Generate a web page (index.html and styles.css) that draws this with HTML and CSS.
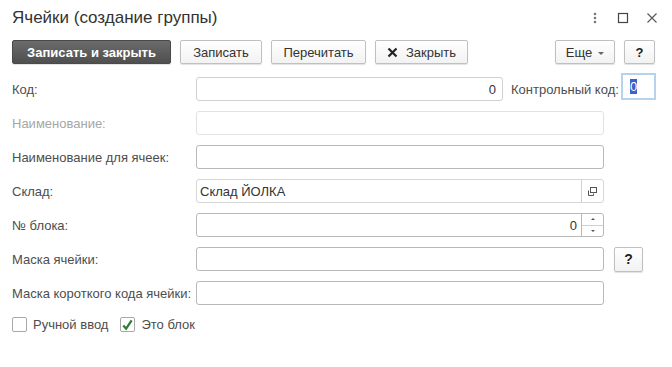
FILE: index.html
```html
<!DOCTYPE html>
<html lang="ru">

<head>
    <meta charset="UTF-8">
    <title>Ячейки (создание группы)</title>
    <link rel="stylesheet" href="styles.css">
</head>

<body>
    <div class="window">
        <div class="title-bar">
            <h1>Ячейки (создание группы)</h1>
            <div class="title-icons">
                <svg width="10" height="12" viewBox="0 0 10 12"><circle cx="5" cy="2" r="1.3" fill="#777"/><circle cx="5" cy="6" r="1.3" fill="#777"/><circle cx="5" cy="10" r="1.3" fill="#777"/></svg>
                <svg width="12" height="12" viewBox="0 0 12 12"><rect x="1.5" y="1.5" width="9" height="9" fill="none" stroke="#444" stroke-width="1.2"/></svg>
                <svg width="12" height="12" viewBox="0 0 12 12"><path d="M1.5 1.5L10.5 10.5M10.5 1.5L1.5 10.5" stroke="#555" stroke-width="1.1"/></svg>
            </div>
        </div>

        <div class="toolbar">
            <button class="btn btn-default w-save-close">Записать и закрыть</button>
            <button class="btn w-save">Записать</button>
            <button class="btn w-reread">Перечитать</button>
            <button class="btn w-close">
                <svg width="11" height="11" viewBox="0 0 11 11"><path d="M1.5 1.5L9.5 9.5M9.5 1.5L1.5 9.5" stroke="#222" stroke-width="2.2"/></svg>
                Закрыть
            </button>
            <div class="spacer"></div>
            <button class="btn w-more">Еще <span class="caret"></span></button>
            <button class="btn w-help">?</button>
        </div>

        <div class="form">
            <div class="row">
                <label class="label">Код:</label>
                <div class="field field-code">0</div>
                <label class="label-inline">Контрольный код:</label>
                <div class="field-check"><span class="selected">0</span></div>
            </div>
            <div class="row">
                <label class="label disabled">Наименование:</label>
                <div class="field field-wide is-disabled"></div>
            </div>
            <div class="row">
                <label class="label">Наименование для ячеек:</label>
                <div class="field field-wide"></div>
            </div>
            <div class="row">
                <label class="label">Склад:</label>
                <div class="field field-wide light has-button">
                    <span class="value">Склад ЙОЛКА</span>
                    <span class="field-btn">
                        <svg width="11" height="11" viewBox="0 0 11 11"><rect x="3.5" y="1.5" width="6" height="5" fill="none" stroke="#555"/><path d="M1.5 4.5V9.5H6.5V7.5" fill="none" stroke="#555"/></svg>
                    </span>
                </div>
            </div>
            <div class="row">
                <label class="label">№ блока:</label>
                <div class="field field-wide has-button">
                    <span class="value num">0</span>
                    <span class="spin">
                        <span class="spin-up"></span>
                        <span class="spin-down"></span>
                    </span>
                </div>
            </div>
            <div class="row">
                <label class="label">Маска ячейки:</label>
                <div class="field field-wide"></div>
                <button class="btn btn-help-field">?</button>
            </div>
            <div class="row">
                <label class="label">Маска короткого кода ячейки:</label>
                <div class="field field-wide"></div>
            </div>
            <div class="checks">
                <label class="check"><span class="box"></span>Ручной ввод</label>
                <label class="check"><span class="box">
                    <svg width="14" height="14" viewBox="0 0 14 14"><path d="M2.5 7.5L5.5 11L11.5 2" fill="none" stroke="#2e7d32" stroke-width="2.4"/></svg>
                </span>Это блок</label>
            </div>
        </div>
    </div>
</body>

</html>
```

FILE: styles.css
```css
body {
    margin: 0;
    background: #ffffff;
    font-family: 'Liberation Sans', Arial, sans-serif;
    font-size: 13px;
    color: #4d4d4d;
}

.window {
    width: 672px;
    height: 367px;
}

.title-bar {
    display: flex;
    align-items: center;
    height: 36px;
    padding: 0 14px 0 12px;
}

.title-bar h1 {
    margin: 0;
    flex: 1;
    font-size: 17px;
    font-weight: normal;
    color: #333;
}

.title-icons {
    display: flex;
    align-items: center;
    gap: 17px;
}

.toolbar {
    display: flex;
    align-items: center;
    gap: 9px;
    margin-top: 4px;
    padding: 0 17px 0 12px;
    height: 24px;
}

.spacer {
    flex: 1;
}

.btn {
    display: flex;
    align-items: center;
    justify-content: center;
    gap: 8px;
    height: 24px;
    padding: 0;
    font-family: inherit;
    font-size: 13px;
    color: #333;
    background: linear-gradient(#ffffff, #f2f2f2);
    border: 1px solid #c0c0c0;
    border-radius: 2px;
    box-shadow: 0 1px 1px rgba(0, 0, 0, 0.12);
}

.btn-default {
    color: #ffffff;
    font-weight: bold;
    background: linear-gradient(#6b6b6b, #4f4f4f);
    border-color: #4a4a4a;
}

.w-save-close { width: 159px; }
.w-save { width: 82px; }
.w-reread { width: 95px; }
.w-close { width: 93px; }
.w-more { width: 60px; gap: 6px; }
.w-help { width: 31px; font-weight: bold; color: #222; }

.caret {
    width: 0;
    height: 0;
    border-left: 3px solid transparent;
    border-right: 3px solid transparent;
    border-top: 3px solid #666;
    margin-top: 2px;
}

.form {
    padding: 10px 0 0 12px;
}

.row {
    display: flex;
    align-items: center;
    height: 24px;
    margin-bottom: 10px;
}

.row:first-child {
    margin-top: 3px;
}

.label {
    width: 184px;
    flex-shrink: 0;
    color: #4d4d4d;
}

.label.disabled {
    color: #a6a6a6;
}

.field {
    box-sizing: border-box;
    height: 24px;
    border: 1px solid #b8b8b8;
    border-radius: 3px;
    background: #fff;
    color: #333;
    display: flex;
    align-items: center;
    padding: 0 6px 0 3px;
}

.field-code {
    width: 307px;
    border-color: #d0d0d0;
    justify-content: flex-end;
}

.field-wide {
    width: 408px;
}

.field.light {
    border-color: #d6d6d6;
}

.field.is-disabled {
    border-color: #e2e2e2;
}

.label-inline {
    margin-left: 8px;
    width: 110px;
    flex-shrink: 0;
}

.field-check {
    box-sizing: border-box;
    width: 35px;
    height: 27px;
    margin-top: -5px;
    border: 2px solid #b5d3ec;
    display: flex;
    align-items: center;
    padding-left: 7px;
    color: #333;
}

.selected {
    background: #3a62c8;
    color: #fff;
    line-height: 15px;
}

.has-button {
    padding-right: 0;
}

.value {
    flex: 1;
}

.value.num {
    text-align: right;
    padding-right: 4px;
}

.field-btn,
.spin {
    width: 21px;
    height: 22px;
    border-left: 1px solid #d0d0d0;
    display: flex;
    align-items: center;
    justify-content: center;
}

.spin {
    flex-direction: column;
    border-left-color: #b8b8b8;
}

.spin-up,
.spin-down {
    flex: 1;
    width: 100%;
    display: flex;
    align-items: center;
    justify-content: center;
}

.spin-up {
    border-bottom: 1px solid #d0d0d0;
}

.spin-up::after,
.spin-down::after {
    content: "";
    border-left: 2px solid transparent;
    border-right: 2px solid transparent;
}

.spin-up::after {
    border-bottom: 2px solid #555;
}

.spin-down::after {
    border-top: 2px solid #555;
}

.btn-help-field {
    width: 29px;
    height: 25px;
    margin-left: 10px;
    font-weight: bold;
    color: #222;
    font-size: 14px;
}

.checks {
    display: flex;
    gap: 12px;
    padding-top: 2px;
}

.check {
    display: flex;
    align-items: center;
    gap: 6px;
    color: #4d4d4d;
}

.box {
    box-sizing: border-box;
    width: 15px;
    height: 15px;
    border: 1px solid #a8a8a8;
    border-radius: 2px;
    background: #fff;
    display: flex;
    align-items: center;
    justify-content: center;
}
```
